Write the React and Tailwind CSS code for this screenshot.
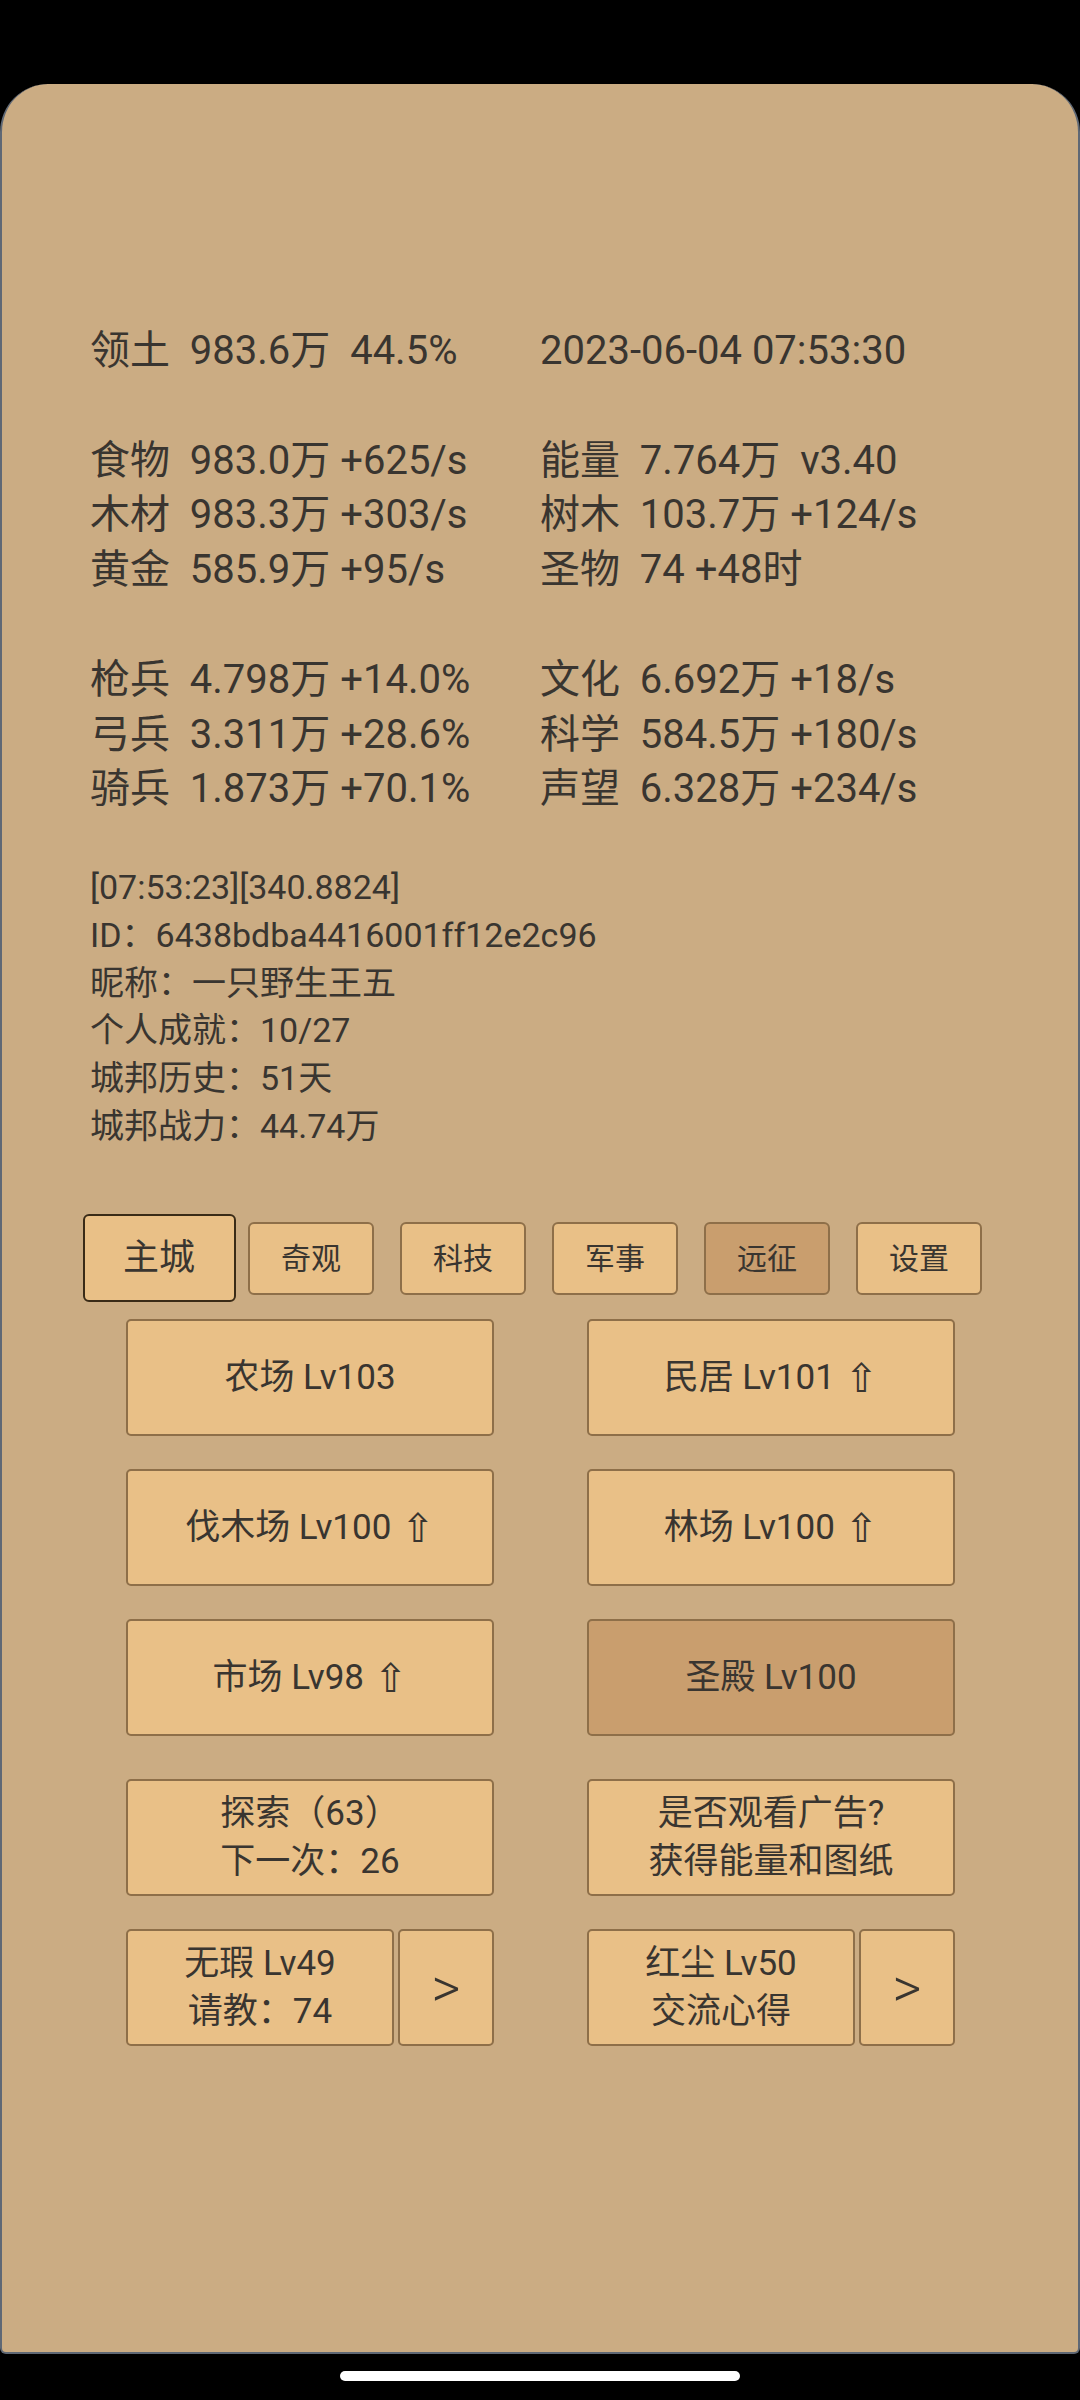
import React from 'react';

const stats = [
  ['领土  983.6万  44.5%', '2023-06-04 07:53:30'],
  ['', ''],
  ['食物  983.0万 +625/s', '能量  7.764万  v3.40'],
  ['木材  983.3万 +303/s', '树木  103.7万 +124/s'],
  ['黄金  585.9万 +95/s', '圣物  74 +48时'],
  ['', ''],
  ['枪兵  4.798万 +14.0%', '文化  6.692万 +18/s'],
  ['弓兵  3.311万 +28.6%', '科学  584.5万 +180/s'],
  ['骑兵  1.873万 +70.1%', '声望  6.328万 +234/s'],
];

const info = [
  '[07:53:23][340.8824]',
  'ID：6438bdba4416001ff12e2c96',
  '昵称：一只野生王五',
  '个人成就：10/27',
  '城邦历史：51天',
  '城邦战力：44.74万',
];

const tabs = [
  { name: '奇观' },
  { name: '科技' },
  { name: '军事' },
  { name: '远征', dark: true },
  { name: '设置' },
];

const buildings = [
  { name: '农场 Lv103' },
  { name: '民居 Lv101', up: true },
  { name: '伐木场 Lv100', up: true },
  { name: '林场 Lv100', up: true },
  { name: '市场 Lv98', up: true },
  { name: '圣殿 Lv100', dark: true },
];

function Up() {
  return <span className="ml-[10px] font-['DejaVu_Sans'] text-[40px] leading-[40px]">⇧</span>;
}

function Btn({ children, dark, className = '' }) {
  return (
    <div
      className={
        'flex items-center justify-center rounded-[5px] border-2 border-[#8e6f49] text-[35px] leading-[48px] ' +
        (dark ? 'bg-[#c99e6e] ' : 'bg-[#e9c087] ') +
        className
      }
    >
      {children}
    </div>
  );
}

export default function App() {
  return (
    <div className="min-h-[2400px] w-[1080px] bg-black pt-[84px] font-[Roboto,'Noto_Sans_CJK_SC',sans-serif] text-[#393530]">
      <div className="h-[2270px] rounded-t-[48px] rounded-b-[6px] border-x-2 border-b-2 border-[#5f6875] bg-[#cbac83] pt-[240px]">
        {/* stats */}
        <div className="pl-[88px] text-[40px] leading-[54.8px] whitespace-pre">
          {stats.map(([l, r], i) => (
            <div key={i} className="grid h-[54.8px] grid-cols-[450px_1fr]">
              <span>{l}</span>
              <span>{r}</span>
            </div>
          ))}
        </div>

        {/* info */}
        <div className="mt-[47px] pl-[88px] text-[34px] leading-[47.7px]">
          {info.map((t) => (
            <div key={t}>{t}</div>
          ))}
        </div>

        {/* tabs */}
        <div className="mt-[64px] ml-[81px] grid h-[88px] w-[912px] grid-cols-6 items-center justify-items-center">
          <div className="flex h-[88px] w-[153px] items-center justify-center rounded-[6px] border-2 border-[#3a2b17] bg-[#e9c087] text-[36px]">
            主城
          </div>
          {tabs.map((t) => (
            <div
              key={t.name}
              className={
                'flex h-[73px] w-[126px] items-center justify-center rounded-[6px] border-2 border-[#8e6f49] text-[30px] ' +
                (t.dark ? 'bg-[#c99e6e]' : 'bg-[#e9c087]')
              }
            >
              {t.name}
            </div>
          ))}
        </div>

        {/* buildings */}
        <div className="mt-[17px] ml-[124px] grid grid-cols-[368px_368px] gap-x-[93px] gap-y-[33px]">
          {buildings.map((b) => (
            <Btn key={b.name} dark={b.dark} className="h-[117px]">
              {b.name}
              {b.up && <Up />}
            </Btn>
          ))}
        </div>

        {/* actions */}
        <div className="mt-[43px] ml-[124px] grid grid-cols-[368px_368px] gap-x-[93px] gap-y-[33px]">
          <Btn className="h-[117px] flex-col">
            <div>探索（63）</div>
            <div>下一次：26</div>
          </Btn>
          <Btn className="h-[117px] flex-col">
            <div>是否观看广告?</div>
            <div>获得能量和图纸</div>
          </Btn>
          <div className="flex h-[117px] gap-[4px]">
            <Btn className="w-[268px] flex-col">
              <div>无瑕 Lv49</div>
              <div>请教：74</div>
            </Btn>
            <Btn className="flex-1 text-[56px] font-light">&gt;</Btn>
          </div>
          <div className="flex h-[117px] gap-[4px]">
            <Btn className="w-[268px] flex-col">
              <div>红尘 Lv50</div>
              <div>交流心得</div>
            </Btn>
            <Btn className="flex-1 text-[56px] font-light">&gt;</Btn>
          </div>
        </div>
      </div>
      <div className="mx-auto mt-[17px] h-[10px] w-[400px] rounded-full bg-white" />
    </div>
  );
}
